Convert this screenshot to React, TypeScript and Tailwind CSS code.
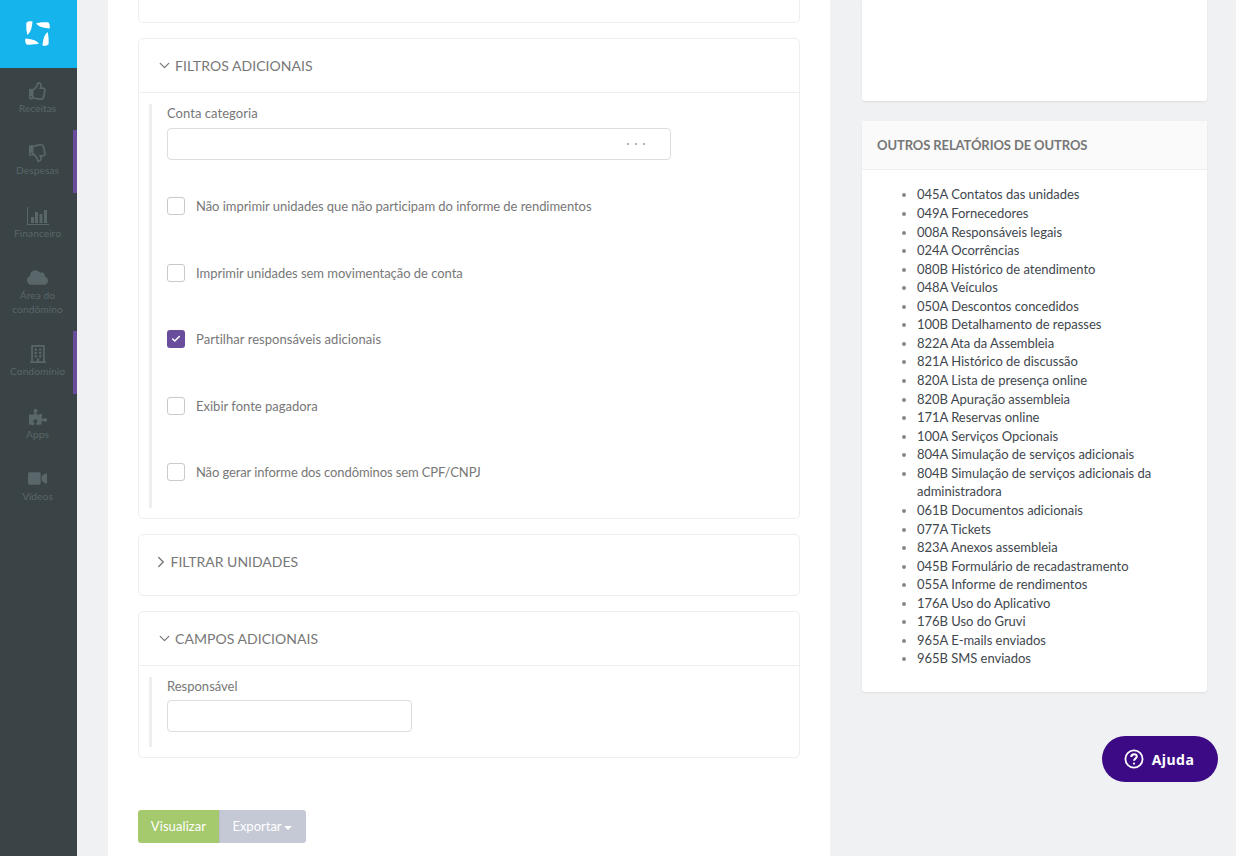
import { ChevronDown, ChevronRight, Check } from "lucide-react";
import type { ReactNode } from "react";
import {
  FaRegThumbsUp,
  FaRegThumbsDown,
  FaCloud,
  FaRegBuilding,
  FaPuzzlePiece,
  FaVideo,
} from "react-icons/fa";

function ChartIcon() {
  return (
    <svg viewBox="0 0 22 18" className="h-[18px] w-[22px]" fill="#59666a">
      <path d="M0 0h1v17h21v1H0z" />
      <path d="M4 10h3v6H4zM8 5h3v11H8zM12.500 7h3v9h-3zM17 3h3v13h-3z" />
    </svg>
  );
}

const blade = "M11 2.500C14 1.500 20 1 23.500 1.500 25 3.500 25 5.500 24.500 7.500 20 7 14.500 6.500 11 2.500z";

function Logo() {
  return (
    <svg viewBox="0 0 25 25" className="mb-[2px] mr-[2px] h-[25px] w-[25px]" fill="#fff">
      <path d={blade} />
      <path d={blade} transform="rotate(90 12.500 12.500)" />
      <path d={blade} transform="rotate(180 12.500 12.500)" />
      <path d={blade} transform="rotate(270 12.500 12.500)" />
    </svg>
  );
}

const navItems: { label: string[]; icon: ReactNode; marked?: boolean; tall?: boolean }[] = [
  { label: ["Receitas"], icon: <FaRegThumbsUp size={18} /> },
  { label: ["Despesas"], icon: <FaRegThumbsDown size={18} />, marked: true },
  { label: ["Financeiro"], icon: <ChartIcon /> },
  { label: ["Área do", "condômino"], icon: <FaCloud size={21} />, tall: true },
  { label: ["Condomínio"], icon: <FaRegBuilding size={18} />, marked: true },
  { label: ["Apps"], icon: <FaPuzzlePiece size={18} /> },
  { label: ["Vídeos"], icon: <FaVideo size={19} /> },
];

const reports = [
  "045A Contatos das unidades",
  "049A Fornecedores",
  "008A Responsáveis legais",
  "024A Ocorrências",
  "080B Histórico de atendimento",
  "048A Veículos",
  "050A Descontos concedidos",
  "100B Detalhamento de repasses",
  "822A Ata da Assembleia",
  "821A Histórico de discussão",
  "820A Lista de presença online",
  "820B Apuração assembleia",
  "171A Reservas online",
  "100A Serviços Opcionais",
  "804A Simulação de serviços adicionais",
  "804B Simulação de serviços adicionais da administradora",
  "061B Documentos adicionais",
  "077A Tickets",
  "823A Anexos assembleia",
  "045B Formulário de recadastramento",
  "055A Informe de rendimentos",
  "176A Uso do Aplicativo",
  "176B Uso do Gruvi",
  "965A E-mails enviados",
  "965B SMS enviados",
];

const options = [
  {
    label: "Não imprimir unidades que não participam do informe de rendimentos",
    tracking: "tracking-[-0.05px]",
  },
  { label: "Imprimir unidades sem movimentação de conta", tracking: "tracking-[-0.03px]" },
  { label: "Partilhar responsáveis adicionais", checked: true, tracking: "tracking-[0.05px]" },
  { label: "Exibir fonte pagadora", tracking: "" },
  { label: "Não gerar informe dos condôminos sem CPF/CNPJ", tracking: "tracking-[-0.11px]" },
];

function Sidebar() {
  return (
    <aside className="flex w-[77px] shrink-0 flex-col bg-[#3a4345]">
      <div className="flex h-[68px] shrink-0 items-center justify-center bg-[#16b4ec]">
        <Logo />
      </div>
      <nav className="flex flex-col">
        {navItems.map((item) => (
          <div
            key={item.label[0]}
            className={`flex flex-col items-center border-r-4 pt-[13px] text-center text-[10.300px] leading-[14px] text-[#59666a] ${
              item.tall ? "h-[76.500px]" : "h-[62.300px]"
            } ${item.marked ? "border-[#6a4c9c]" : "border-transparent"}`}
          >
            <div className="mr-[-2px] flex h-[20px] items-center justify-center">{item.icon}</div>
            <div className="mr-[-2px]">
              {item.label.map((line) => (
                <div key={line}>{line}</div>
              ))}
            </div>
          </div>
        ))}
      </nav>
    </aside>
  );
}

function Box() {
  return <div className="h-[18px] w-[18px] shrink-0 rounded-[3px] border border-[#c9c9c9] bg-white" />;
}

function SectionHeader({ title }: { title: string }) {
  return (
    <div className="flex h-[53px] items-center gap-[2.500px] pl-[16.500px] text-[14px] text-[#777]">
      <ChevronDown className="size-[17px]" strokeWidth={1.800} />
      <span className="tracking-[0.05px]">{title}</span>
    </div>
  );
}

function Reports() {
  return (
    <div className="w-[345px] shrink-0">
      <div className="h-[101px] rounded-b-[3px] bg-white shadow-[0_1px_2px_rgba(0,0,0,0.08)]" />
      <div className="mt-[20px] rounded-[3px] bg-white shadow-[0_1px_2px_rgba(0,0,0,0.08)]">
        <div className="flex h-[49px] items-center border-b border-[#eeeeee] bg-[#fafafa] px-[15px] pt-[1px] text-[13px] font-bold tracking-[-0.1px] text-[#777]">
          OUTROS RELATÓRIOS DE OUTROS
        </div>
        <ul className="list-disc pb-[23.600px] pl-[55px] pr-[40px] pt-[15.400px] text-[13px] leading-[18.570px] tracking-[-0.03px] text-[#3f474e] marker:text-[#888]">
          {reports.map((r) => (
            <li key={r}>{r}</li>
          ))}
        </ul>
      </div>
    </div>
  );
}

export default function App() {
  return (
    <div className="flex h-screen overflow-hidden bg-[#f0f1f3] font-['Lato','Liberation_Sans',sans-serif]">
      <Sidebar />
      <main className="ml-[31px] flex w-[722px] shrink-0 flex-col bg-white px-[30px]">
        <div className="h-[23px] shrink-0 rounded-b-[5px] border border-t-0 border-[#eeeeee]" />

        <section className="mt-[15px] rounded-[5px] border border-[#eeeeee]">
          <SectionHeader title="FILTROS ADICIONAIS" />
          <div className="border-t border-[#eeeeee] pb-[10px] pl-[10px] pt-[11px]">
            <div className="border-l-[3px] border-[#eeeeee] pb-[27px] pl-[15px] text-[13px] leading-[18.570px] text-[#777]">
              <label className="block tracking-[0.05px]">Conta categoria</label>
              <div className="mt-[5.500px] flex h-[32px] w-[504px] items-center justify-end rounded-[4px] border border-[#dddddd] pr-[25px]">
                <span className="flex gap-[6px]">
                  <i className="size-[2px] rounded-full bg-[#999]" />
                  <i className="size-[2px] rounded-full bg-[#999]" />
                  <i className="size-[2px] rounded-full bg-[#999]" />
                </span>
              </div>
              <div className="mt-[37px] flex flex-col">
                {options.map((o) => (
                  <div key={o.label} className="flex h-[66.500px] items-start gap-[11px] last:h-[18px]">
                    {o.checked ? (
                      <div className="flex h-[18px] w-[18px] shrink-0 items-center justify-center rounded-[3px] bg-[#6a4c9c]">
                        <Check className="size-[10px] text-white" strokeWidth={3.500} />
                      </div>
                    ) : (
                      <Box />
                    )}
                    <span className={`leading-[18px] ${o.tracking}`}>{o.label}</span>
                  </div>
                ))}
              </div>
            </div>
          </div>
        </section>

        <section className="mt-[15px] h-[62px] shrink-0 rounded-[5px] border border-[#eeeeee]">
          <div className="flex h-[53px] items-center gap-[0.500px] pl-[13px] text-[14px] text-[#777]">
            <ChevronRight className="size-[18px]" strokeWidth={1.800} />
            <span>FILTRAR UNIDADES</span>
          </div>
        </section>

        <section className="mt-[15px] rounded-[5px] border border-[#eeeeee]">
          <SectionHeader title="CAMPOS ADICIONAIS" />
          <div className="border-t border-[#eeeeee] pb-[10px] pl-[10px] pt-[11px]">
            <div className="border-l-[3px] border-[#eeeeee] pb-[15px] pl-[15px] text-[13px] leading-[18.570px] text-[#777]">
              <label className="block">Responsável</label>
              <div className="mt-[4px] h-[32px] w-[245px] rounded-[4px] border border-[#dddddd]" />
            </div>
          </div>
        </section>

        <div className="mt-[52px] flex text-[13px]">
          <button
            type="button"
            className="h-[33px] w-[81px] rounded-l-[3px] bg-[#a5c96d] pt-[1px] tracking-[0.08px] text-white"
          >
            Visualizar
          </button>
          <button
            type="button"
            className="flex h-[33px] w-[87px] items-center justify-center gap-[2px] rounded-r-[3px] border-l border-[#b8bccb] bg-[#c5c9d6] pr-[2px] pt-[1px] text-white"
          >
            Exportar
            <i className="mt-[2px] border-x-[4px] border-t-[4px] border-x-transparent border-t-white" />
          </button>
        </div>
      </main>

      <div className="ml-[32px]">
        <Reports />
      </div>

      <button
        type="button"
        className="fixed bottom-[74px] right-[18px] flex h-[46px] w-[116px] items-center justify-center gap-[8px] rounded-full bg-[#3c0a85] pr-[2px] font-['Noto_Sans',sans-serif] text-[14px] font-bold tracking-[0.5px] text-white"
      >
        <svg viewBox="0 0 20 20" className="size-[20px]" fill="none" stroke="#fff" strokeWidth="1.800">
          <circle cx="10" cy="10" r="8.600" />
          <path d="M7.300 7.900c0-1.600 1.200-2.600 2.800-2.600s2.700 1 2.700 2.300c0 2-2.800 2-2.800 4.200" strokeWidth="2" />
          <circle cx="10" cy="14.600" r="1.100" fill="#fff" stroke="none" />
        </svg>
        Ajuda
      </button>
    </div>
  );
}
